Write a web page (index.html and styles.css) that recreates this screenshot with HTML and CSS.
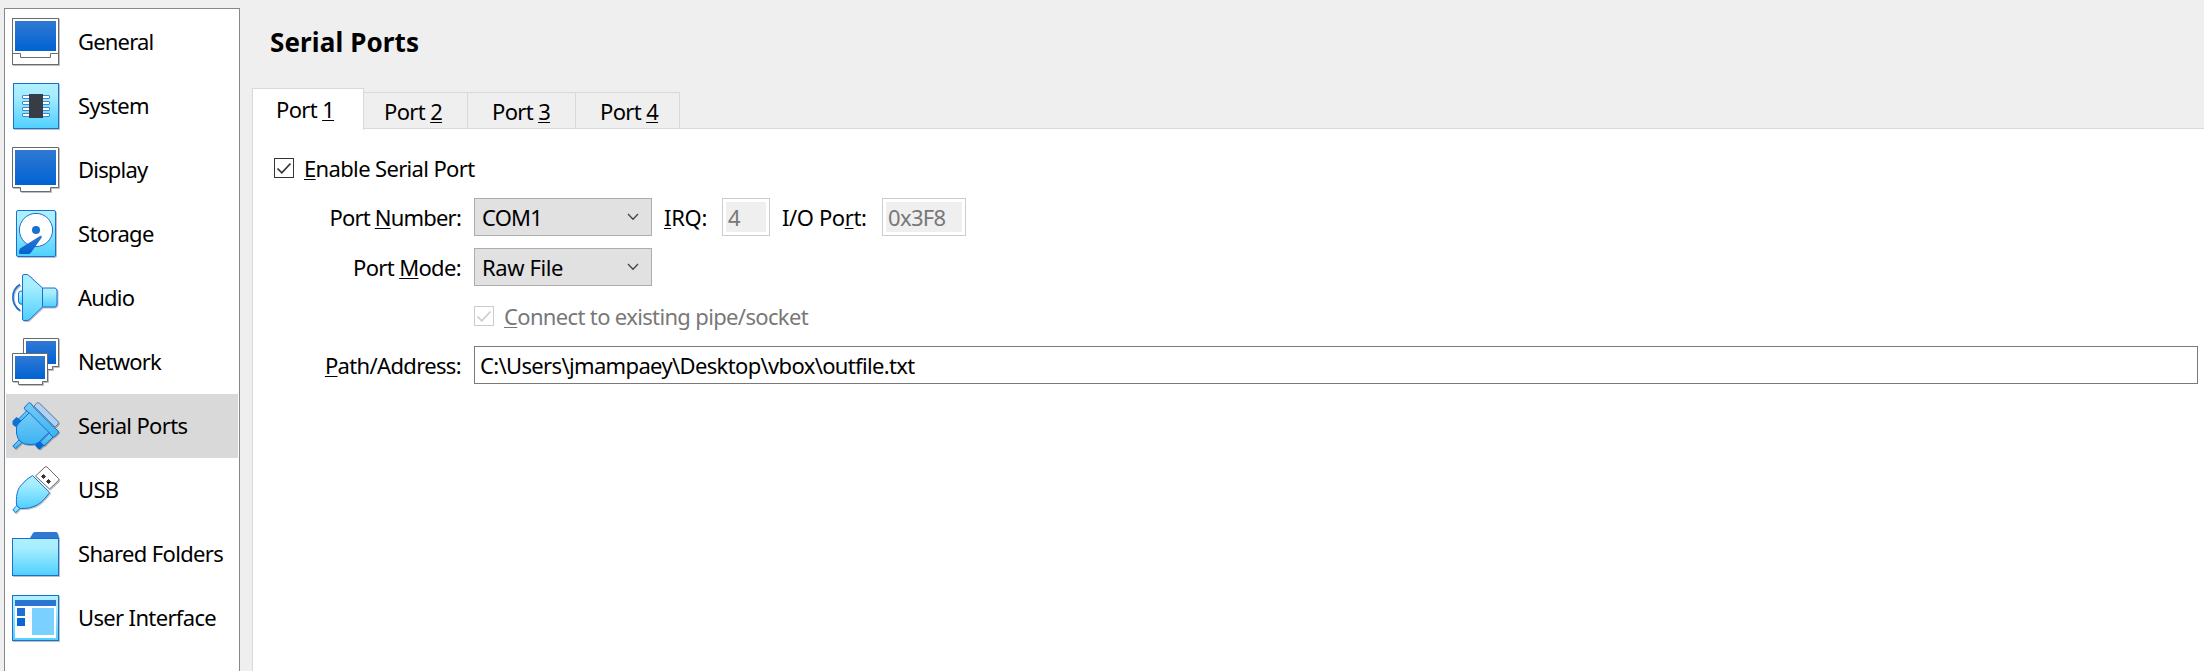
FILE: index.html
```html
<!DOCTYPE html>
<html lang="en">
<head>
<meta charset="utf-8">
<title>Settings - Serial Ports</title>
<link rel="stylesheet" href="styles.css">
</head>
<body>
<svg class="defs" width="0" height="0">
  <defs>
    <linearGradient id="blue" x1="0" y1="0" x2="0" y2="1"><stop offset="0" stop-color="#3079d3"/><stop offset="1" stop-color="#0062d3"/></linearGradient>
    <linearGradient id="cyan" x1="0" y1="0" x2="0" y2="1"><stop offset="0" stop-color="#aef0ff"/><stop offset=".25" stop-color="#a8eeff"/><stop offset="1" stop-color="#4fd0ff"/></linearGradient>
    <linearGradient id="serial" x1="0" y1="0" x2="0" y2="1"><stop offset="0" stop-color="#78ccf7"/><stop offset="1" stop-color="#3ab3f1"/></linearGradient>
  </defs>
</svg>
<div class="window">
  <nav class="sidebar">
    <div class="item"><svg class="icon" viewBox="0 0 48 48"><rect x=".5" y=".5" width="46" height="46" fill="#fff" stroke="#6b6b6b"/><rect x="3" y="3" width="41" height="30" fill="url(#blue)"/><path d="M.5 35.5h8v4h30v-4h8" fill="none" stroke="#6b6b6b"/></svg><span class="name tight">General</span></div>
    <div class="item"><svg class="icon" viewBox="0 0 48 48"><rect x="1.5" y="1.5" width="45" height="45" fill="url(#cyan)" stroke="#1a6fd2"/><g fill="#fff" stroke="#4189cf"><rect x="10.5" y="13.5" width="27" height="3" rx=".5"/><rect x="10.5" y="19.5" width="27" height="3" rx=".5"/><rect x="10.5" y="25.5" width="27" height="3" rx=".5"/><rect x="10.5" y="31.5" width="27" height="3" rx=".5"/></g><rect x="17" y="12" width="14" height="24" fill="#373c47"/></svg><span class="name">System</span></div>
    <div class="item"><svg class="icon" viewBox="0 0 48 48"><path d="M.5 1.5h46v40h-8v4h-30v-4h-8z" fill="#fff" stroke="#6b6b6b"/><rect x="3" y="4" width="41" height="35" fill="url(#blue)"/></svg><span class="name tight">Display</span></div>
    <div class="item"><svg class="icon" viewBox="0 0 48 48"><rect x="4.5" y=".5" width="39" height="46" rx="1.5" fill="url(#cyan)" stroke="#1a6fd2"/><circle cx="24" cy="20" r="16.6" fill="#fff" stroke="#1a6fd2"/><circle cx="24" cy="20" r="4" fill="#1a6fd2"/><path d="M28 26L8 38.5Q7 40 7 43Q7 44 8.5 44H16Q18 44 19 42.5L29.8 27.5Q30 25 28 26z" fill="url(#blue)"/></svg><span class="name">Storage</span></div>
    <div class="item"><svg class="icon" viewBox="0 0 48 48"><g fill="url(#cyan)" stroke="#1a6fd2"><path d="M10.5 17H9Q6.500 17 6.500 20v7Q6.500 30 9 30h1.500z"/><path d="M30.500 14H43Q45 14.500 45 17V30Q45 32.500 43 33H30.500z"/><path d="M12 .5h3Q16.500 1 18 2.500L30.500 14v19L18 45Q16.500 46.500 15 46.500H12Q10.500 46.500 10.500 45V2Q10.500 .5 12 .5z"/></g><path d="M8 10.500C-1.500 16 -1.500 30 8 36.500" fill="none" stroke="#1a6fd2" stroke-width="1.700"/></svg><span class="name tight">Audio</span></div>
    <div class="item"><svg class="icon" viewBox="0 0 48 48"><path d="M11.500 .5h35v28h-6v3h-20v-3h-9z" fill="#fff" stroke="#6b6b6b"/><rect x="14" y="3" width="30" height="23" fill="url(#blue)"/><path d="M.5 15.500h35v28h-5v3h-24v-3h-6z" fill="#fff" stroke="#6b6b6b"/><rect x="3" y="18" width="30" height="23" fill="url(#blue)"/></svg><span class="name tight">Network</span></div>
    <div class="item selected"><svg class="icon" viewBox="0 0 48 48"><path d="M22 4L24.500 1.300Q26 0 27.500 1.300L46 19.500Q47 20.500 46 22L43 25z" fill="#add2f5" stroke="#6480a0"/><path d="M15 8.500L5 18.500L9 22.500L19 12.500z" fill="url(#serial)" stroke="#0f6fd2"/><path d="M4.500 15L.5 19V22.500L4 25L9 21.500V18.500z" fill="#0f6fd8"/><path d="M38.500 30L28 40.500L32 44L42 34z" fill="url(#serial)" stroke="#0f6fd2"/><path d="M26.500 38L23.300 41.500V44L26.500 47.300H28L32 43.200z" fill="#0068d8"/><path d="M7 38L.8 44L3.500 46.700L10 40.500z" fill="url(#serial)" stroke="#0f6fd2"/><path d="M17.500 10.500L7 21Q4.500 23.500 4.500 26V31Q5 37 8.500 39.500Q11.500 42.500 17 42.500H20Q24 42.500 27 40L38 29.500z" fill="url(#serial)" stroke="#0f6fd2"/><path d="M12.800 5L16.300 1.200Q17.500 .2 18.700 1.200L21.500 5L41.500 25L46 28.700Q47 30 46 31.300L42.500 34.500Q41.300 35.500 40 34.500L36.500 30L17.500 11L12.800 7.500Q11.800 6.300 12.800 5z" fill="url(#serial)" stroke="#0f6fd2"/></svg><span class="name">Serial Ports</span></div>
    <div class="item"><svg class="icon" viewBox="0 0 48 48"><path d="M33 1Q34 .3 35 1L46.500 12.500Q47 13.500 46.500 14.500L37.500 23L23.500 10z" fill="#fff" stroke="#6b6b6b"/><path d="M31.500 8.500l2 2-2 2-2-2zM36.500 13.500l2 2-2 2-2-2z" fill="#333" stroke="#333"/><path d="M5 39.500L7.500 42.500L6.500 44L3.500 46.700L.8 44L2.500 42z" fill="url(#cyan)" stroke="#1a6fd2"/><path d="M20.500 9.500L37.700 26.500C34 31 30 37 23 40Q17 43 8 42.500L4.500 39C4 31 5 24 8.500 20Q14 13 20.500 9.500z" fill="url(#cyan)" stroke="#1a6fd2"/></svg><span class="name">USB</span></div>
    <div class="item"><svg class="icon" viewBox="0 0 48 48"><path d="M18 8L21 3Q21.500 2 23 2H44Q45 2 45.500 3L47 8z" fill="#3079d3"/><rect x=".5" y="8.5" width="46" height="37" fill="url(#cyan)" stroke="#1a6fd2"/></svg><span class="name">Shared Folders</span></div>
    <div class="item"><svg class="icon" viewBox="0 0 48 48"><rect x=".5" y="1.5" width="46" height="45" fill="url(#cyan)" stroke="#1a6fd2"/><rect x="3" y="6" width="41" height="38" fill="#fff"/><rect x="3" y="6" width="41" height="6" fill="#2b75d2"/><rect x="5" y="14" width="8" height="8" fill="#216fd3"/><rect x="5" y="24" width="8" height="8" fill="#0868d3"/><rect x="20" y="14" width="22" height="27" fill="#7ad1ff"/></svg><span class="name">User Interface</span></div>
  </nav>
  <main class="content">
    <h1>Serial Ports</h1>
    <div class="tabs">
      <div class="tab active">Port <u>1</u></div>
      <div class="tab">Port <u>2</u></div>
      <div class="tab tab-wide">Port <u>3</u></div>
      <div class="tab">Port <u>4</u></div>
    </div>
    <section class="pane">
      <label class="check-row"><svg class="check" viewBox="0 0 20 20"><rect x=".5" y=".5" width="19" height="19"/><path d="M3.500 10.500L7.800 14.800L16.500 5.500"/></svg><span><u>E</u>nable Serial Port</span></label>
      <div class="form">
        <div class="label number">Port <u>N</u>umber:</div>
        <div class="controls">
          <div class="select"><span class="tight">COM1</span><svg class="chevron" viewBox="0 0 12 8"><path d="M1 1L6 6.200L11 1"/></svg></div>
          <div class="irq"><u>I</u>RQ:</div><div class="readonly small"><span>4</span></div>
          <div class="io">I/O Po<u>r</u>t:</div><div class="readonly large"><span>0x3F8</span></div>
        </div>
        <div class="label">Port <u>M</u>ode:</div>
        <div class="controls"><div class="select"><span class="raw">Raw File</span><svg class="chevron" viewBox="0 0 12 8"><path d="M1 1L6 6.200L11 1"/></svg></div></div>
        <label class="connect"><svg class="check" viewBox="0 0 20 20"><rect x=".5" y=".5" width="19" height="19"/><path d="M3.500 10.500L7.800 14.800L16.500 5.500"/></svg><span><u>C</u>onnect to existing pipe/socket</span></label>
        <div class="label"><u>P</u>ath/Address:</div>
        <div class="input"><span>C:\Users\jmampaey\Desktop\vbox\outfile.txt</span></div>
      </div>
    </section>
  </main>
</div>
</body>
</html>
```
FILE: styles.css
```css
* { box-sizing: border-box; }
body { margin: 0; background: #efefef; font: 22px/30px "Noto Sans", Tahoma, sans-serif; letter-spacing: -0.65px; color: #000; }
.defs { display: block; height: 0; }
.window { display: flex; height: 671px; overflow: hidden; padding-left: 4px; }
.sidebar { width: 236px; height: 680px; margin-top: 8px; border: 1px solid #828790; background: #fff; padding: 1px; flex: none; }
.item { display: flex; align-items: center; height: 64px; padding-left: 6px; gap: 18px; white-space: nowrap; }
.item.selected { background: #d9d9d9; }
.name { padding-bottom: 2px; }
.tight { letter-spacing: -0.8px; }
.icon { width: 48px; height: 48px; flex: none; overflow: visible; filter: drop-shadow(1px 1px 0 rgba(0,0,0,.25)); }
.content { flex: 1; display: flex; flex-direction: column; margin-left: 12px; min-width: 0; }
h1 { margin: 24px 0 0 18px; height: 64px; font-size: 26px; line-height: 37px; font-weight: 700; letter-spacing: 0.12px; }
u { text-decoration: underline; text-decoration-thickness: 1px; text-underline-offset: 2px; text-decoration-skip-ink: none; }
.tabs { display: flex; align-items: flex-end; height: 40px; }
.tab { width: 104px; height: 37px; margin-bottom: -1px; border: 1px solid #d9d9d9; border-left: 0; padding: 3px 0 0 20px; white-space: nowrap; }
.tab.tab-wide { width: 108px; padding-left: 24px; }
.tab.tab-wide + .tab { padding-left: 24px; }
.tab.active { width: 112px; height: 42px; margin-bottom: -2px; border: 1px solid #d9d9d9; border-bottom: 0; background: #fff; padding: 5px 0 0 23px; z-index: 1; }
.pane { flex: 1; border: solid #d9d9d9; border-width: 1px 0 0 1px; background: #fff; padding: 24px 6px 0 21px; }
.check-row, .connect { display: flex; align-items: center; gap: 10px; height: 30px; }
.check { width: 20px; height: 20px; flex: none; fill: #fff; stroke: #333; }
.check path { fill: none; stroke-width: 1.7; }
.form { display: grid; grid-template-columns: 188px 1fr; gap: 12px; grid-template-rows: 38px 38px 36px 38px; margin-top: 15px; align-items: center; }
.label { text-align: right; white-space: nowrap; padding-right: 1px; }
.number { letter-spacing: -0.8px; }
.controls { display: flex; align-items: center; }
.select { display: flex; align-items: center; justify-content: space-between; width: 178px; height: 38px; background: #e1e1e1; border: 1px solid #adadad; padding: 0 12px 0 7px; }
.raw { letter-spacing: -0.4px; }
.chevron { width: 12px; height: 8px; fill: none; stroke: #444; stroke-width: 1.3; }
.irq { width: 70px; padding-left: 12px; letter-spacing: -0.3px; }
.io { width: 112px; padding-left: 12px; letter-spacing: -0.4px; }
.readonly { height: 38px; border: 1px solid #ccc; background: #efefef; box-shadow: inset 0 0 0 3px #fff; padding: 3px 0 0 5px; color: #787878; }
.small { width: 48px; }
.large { width: 84px; }
.connect { grid-column: 2; color: #787878; }
.connect .check { stroke: #ccc; }
.input { height: 38px; border: 1px solid #7a7a7a; background: #fff; padding: 3px 5px; white-space: nowrap; }
```
